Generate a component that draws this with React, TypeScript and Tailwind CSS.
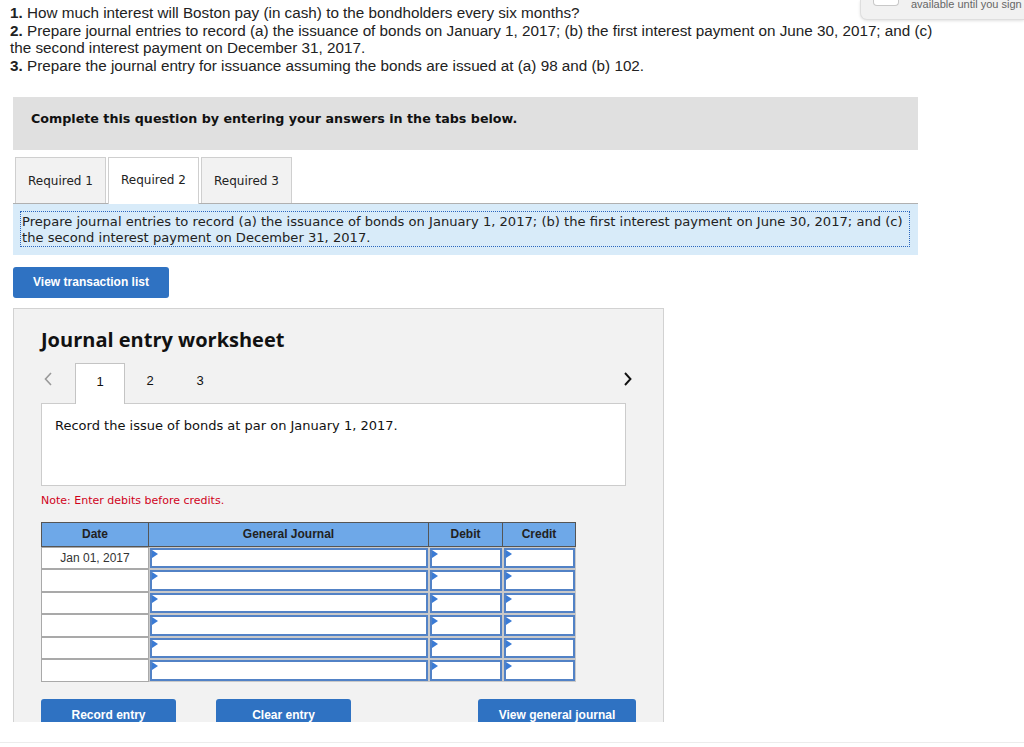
import React from "react";

const verdana = { fontFamily: '"DejaVu Sans", Verdana, sans-serif' };
const arial = { fontFamily: '"Liberation Sans", Arial, sans-serif' };
const heading = { fontFamily: '"Open Sans", "Liberation Sans", sans-serif' };

function Tri() {
  return (
    <span className="absolute left-0 top-0 w-0 h-0 border-t-[4px] border-b-[4px] border-l-[6px] border-t-transparent border-b-transparent border-l-[#3a7bd5]" />
  );
}

function InputCell({ w }: { w: string }) {
  return (
    <div className={`${w} h-full p-[1px] bg-[#c9c9c9]`}>
      <div className="relative w-full h-full border-2 border-[#5282c6] bg-white">
        <Tri />
      </div>
    </div>
  );
}

function Row({ date }: { date?: string }) {
  return (
    <div className="flex h-[22.5px]">
      <div
        className="w-[108px] h-full border border-[#a9a9a9] bg-white flex items-center justify-center text-[12px] text-[#333]"
        style={arial}
      >
        {date}
      </div>
      <InputCell w="w-[280px]" />
      <InputCell w="w-[74px]" />
      <InputCell w="w-[73px]" />
    </div>
  );
}

export default function App() {
  return (
    <div className="relative w-[1024px] h-[747px] bg-white overflow-hidden">
      {/* top-right popup */}
      <div className="absolute top-0 right-0 w-[164px] h-[20px] bg-[#f1f1f1] rounded-bl-[7px] border-b border-l border-[#dedede] shadow-[0_1px_3px_rgba(0,0,0,0.12)] flex items-start pl-[12px] z-20">
        <div className="w-[26px] h-[6px] bg-white border border-[#c8c8c8] border-t-0 rounded-b-[4px]" />
        <span
          className="ml-[12px] -mt-[3px] text-[11px] leading-[14px] text-[#666] whitespace-nowrap"
          style={arial}
        >
          available until you sign
        </span>
      </div>

      <div className="h-[722px] overflow-hidden">
        {/* Questions */}
        <div
          className="pl-[10px] pt-[4px] text-[15.25px] leading-[17.7px] text-[#222] whitespace-nowrap"
          style={arial}
        >
          <div>
            <b>1.</b> How much interest will Boston pay (in cash) to the bondholders every six months?
          </div>
          <div>
            <b>2.</b> Prepare journal entries to record (a) the issuance of bonds on January 1, 2017; (b) the first
            interest payment on June 30, 2017; and (c)
          </div>
          <div>the second interest payment on December 31, 2017.</div>
          <div>
            <b>3.</b> Prepare the journal entry for issuance assuming the bonds are issued at (a) 98 and (b) 102.
          </div>
        </div>

        <div className="ml-[13px] w-[905px] mt-[22px]">
          {/* banner */}
          <div
            className="h-[53px] bg-[#e0e0e0] pl-[18px] pt-[14px] text-[12.7px] leading-[16px] font-bold text-[#111]"
            style={verdana}
          >
            Complete this question by entering your answers in the tabs below.
          </div>

          {/* tabs */}
          <div className="flex items-end gap-[2px] pl-[2px] mt-[7px] h-[46px]" style={verdana}>
            <div className="w-[91px] h-[46px] bg-[#f2f2f2] border border-[#cfcfcf] border-b-0 flex items-center justify-center text-[12px] text-[#222] pt-[2px]">
              Required 1
            </div>
            <div className="relative z-10 w-[91px] h-[47px] -mb-px bg-white border border-[#cfcfcf] border-b-0 flex items-center justify-center text-[12px] text-[#222] pb-[1px]">
              Required 2
            </div>
            <div className="w-[91px] h-[46px] bg-[#f2f2f2] border border-[#cfcfcf] border-b-0 flex items-center justify-center text-[12px] text-[#222] pt-[2px]">
              Required 3
            </div>
          </div>

          {/* blue instructions */}
          <div className="bg-[#d8ebf9] border-t border-[#b0b0b0] pl-[7px] pr-[8px] pt-[7px] pb-[8px]">
            <div
              className="border border-dotted border-[#2a66be] pl-[1px] pt-[2px] text-[13.1px] leading-[16px] text-[#222] whitespace-nowrap"
              style={verdana}
            >
              Prepare journal entries to record (a) the issuance of bonds on January 1, 2017; (b) the first interest
              payment on June 30, 2017; and (c)
              <br />
              the second interest payment on December 31, 2017.
            </div>
          </div>

          {/* view transaction list */}
          <button
            className="mt-[12px] w-[156px] h-[31px] bg-[#2f72c2] rounded-[3px] text-white text-[12px] font-bold flex items-center justify-center"
            style={arial}
          >
            View transaction list
          </button>

          {/* panel */}
          <div className="mt-[10px] w-[651px] bg-[#f2f2f2] border border-[#d2d2d2] pl-[27px] pt-[19px] pb-[30px]">
            <div className="text-[20px] leading-[24px] font-bold text-[#111]" style={heading}>
              Journal entry worksheet
            </div>

            {/* pagination */}
            <div className="mt-[11px] flex items-end w-[585px] h-[40px]" style={arial}>
              <div className="w-[34px] h-[40px] flex items-start pt-[9px] pl-[3px]">
                <svg width="8" height="14" viewBox="0 0 8 14">
                  <path d="M7 1 L1.5 7 L7 13" fill="none" stroke="#999" strokeWidth="1.6" />
                </svg>
              </div>
              <div className="relative z-10 w-[50px] h-[41px] -mb-px bg-white border border-[#c4c4c4] border-b-0 flex items-start pt-[8px] justify-center text-[13px] text-[#111]">
                1
              </div>
              <div className="w-[50px] h-[40px] flex items-start pt-[8px] justify-center text-[13px] text-[#111]">2</div>
              <div className="w-[50px] h-[40px] flex items-start pt-[8px] justify-center text-[13px] text-[#111]">3</div>
              <div className="ml-auto h-[40px] flex items-start pt-[9px] mr-[-6px]">
                <svg width="8" height="14" viewBox="0 0 8 14">
                  <path d="M1 1 L6.5 7 L1 13" fill="none" stroke="#111" strokeWidth="1.9" />
                </svg>
              </div>
            </div>

            {/* content box */}
            <div
              className="w-[585px] h-[83px] bg-white border border-[#cccccc] pl-[13px] pt-[14px] text-[13px] leading-[16px] text-[#111]"
              style={verdana}
            >
              Record the issue of bonds at par on January 1, 2017.
            </div>

            <div className="mt-[8px] text-[11px] leading-[14px] text-[#d0021b]" style={verdana}>
              Note: Enter debits before credits.
            </div>

            {/* table */}
            <div className="mt-[14px] w-[535px]">
              <div
                className="flex h-[25px] bg-[#6ea8e8] border border-[#555] text-[12px] font-bold text-[#222]"
                style={arial}
              >
                <div className="w-[107px] border-r border-[#555] flex items-center justify-center">Date</div>
                <div className="w-[280px] border-r border-[#555] flex items-center justify-center">
                  General Journal
                </div>
                <div className="w-[74px] border-r border-[#555] flex items-center justify-center">Debit</div>
                <div className="flex-1 flex items-center justify-center">Credit</div>
              </div>
              <Row date="Jan 01, 2017" />
              <Row />
              <Row />
              <Row />
              <Row />
              <Row />
            </div>

            {/* bottom buttons */}
            <div className="mt-[17px] w-[595px] flex" style={arial}>
              <button className="w-[135px] h-[33px] bg-[#2f72c2] rounded-[3px] text-white text-[12px] font-bold flex items-center justify-center">
                Record entry
              </button>
              <button className="ml-[40px] w-[135px] h-[33px] bg-[#2f72c2] rounded-[3px] text-white text-[12px] font-bold flex items-center justify-center">
                Clear entry
              </button>
              <button className="ml-auto w-[158px] h-[33px] bg-[#2f72c2] rounded-[3px] text-white text-[12px] font-bold flex items-center justify-center">
                View general journal
              </button>
            </div>
          </div>
        </div>
      </div>
      <div className="mt-[20px] border-t border-[#ececec]" />
    </div>
  );
}
